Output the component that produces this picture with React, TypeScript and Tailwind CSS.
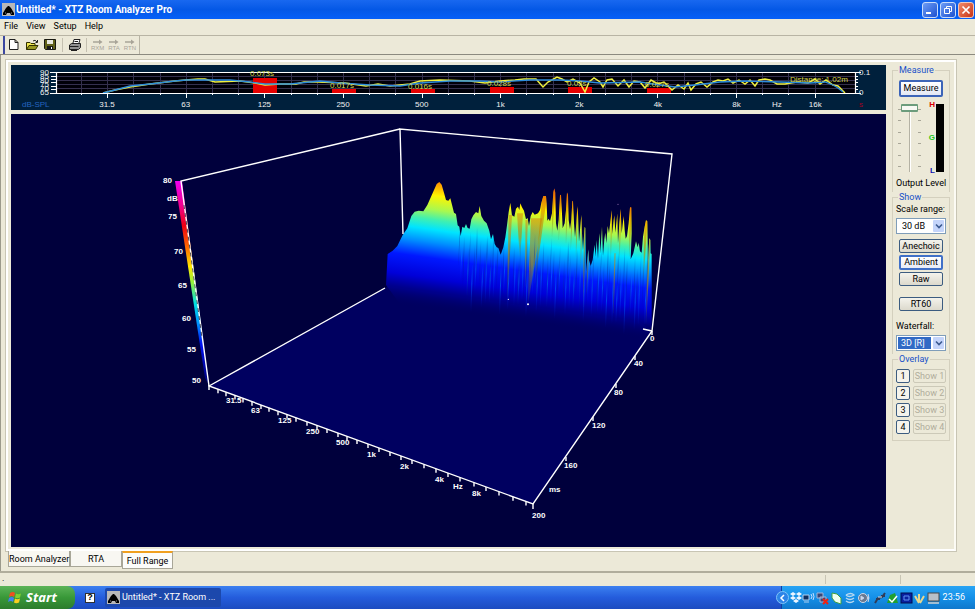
import React from "react";

const octaves = ["31.5", "63", "125", "250", "500", "1k", "2k", "4k", "8k", "16k"];

const reverb = [
  { x: 253, y: 78, label: "0.073s", lx: 250, ly: 76 },
  { x: 332, y: 89, label: "0.017s", lx: 330, ly: 88 },
  { x: 411, y: 89, label: "0.016s", lx: 408, ly: 89 },
  { x: 490, y: 87, label: "0.028s", lx: 487, ly: 86 },
  { x: 568, y: 87, label: "0.03s", lx: 567, ly: 86 },
  { x: 647, y: 88, label: "0.027s", lx: 645, ly: 87 },
];

const ambientCurve =
  "M103 93 L115 90 L130 87 L150 84 L175 81 L186 80 L198 79 L205 79 L215 82 L240 81 L255 83 L265 85 L280 84 L296 84 L304 82 L318 82 L345 83 L366 86 L378 84 L390 86 L410 84 L420 81 L440 80 L470 81 L485 83 L500 81 L515 80 L524 79 L536 79 L543 87 L548 82 L557 77 L562 79 L567 82 L573 79 L580 83 L585 92 L589 82 L594 78 L600 82 L603 87 L607 80 L612 79 L618 86 L624 80 L629 87 L634 81 L640 82 L645 88 L651 80 L658 84 L664 82 L672 90 L678 85 L684 89 L688 83 L691 90 L696 84 L701 82 L707 87 L713 82 L718 80 L723 81 L728 79 L733 83 L739 80 L745 84 L750 80 L755 86 L759 80 L765 79 L770 80 L777 84 L785 84 L797 82 L808 83 L815 79 L820 84 L826 80 L833 85 L838 86 L845 93";

const anechoicCurve =
  "M103 93 L115 90 L130 86 L150 84 L175 81 L186 80 L230 80 L250 82 L265 84 L290 84 L320 81 L340 83 L370 85 L400 86 L420 83 L450 81 L480 81 L500 82 L530 80 L560 80 L580 81 L600 83 L640 82 L660 85 L675 87 L695 85 L720 82 L745 81 L780 82 L810 83 L825 82 L833 85 L838 88 L843 92";

function LevelChart() {
  return (
    <svg viewBox="11 65 875 45" className="block w-full bg-[#00203c]" role="img" aria-label="Sound level by frequency">
      <rect x="56" y="72" width="799" height="21" fill="#000008" />
      <g stroke="#34304e" strokeWidth="1">
        {[76, 80, 84, 88].map((y) => (
          <path key={y} d={`M56 ${y + 0.5}H855`} />
        ))}
        {Array.from({ length: 29 }, (_, i) => (
          <path key={i} d={`M${Math.round(81 + i * 26.2) + 0.5} 72V93`} />
        ))}
      </g>
      {reverb.map((r) => (
        <rect key={r.x} x={r.x} y={r.y} width="24" height={93 - r.y} fill="#e60000" />
      ))}
      <path d={ambientCurve} fill="none" stroke="#f0f040" strokeWidth="1.5" />
      <path d={anechoicCurve} fill="none" stroke="#2c8cdc" strokeWidth="1.3" />
      <g stroke="#fff" fill="none">
        <path d="M50 72.5H861M50 93.5H861M56.5 72V94M855.5 72V94" strokeWidth="1.2" />
        {Array.from({ length: 29 }, (_, i) => (
          <path key={i} d={`M${Math.round(81 + i * 26.2) + 0.5} 93V${i % 3 === 1 ? 98 : 95}`} />
        ))}
        {[76, 79, 82, 86, 89].map((y) => (
          <path key={y} d={`M51 ${y + 0.5}H56M855 ${y + 0.5}H858`} />
        ))}
      </g>
      <g fill="#d4d448" className="font-['Liberation_Sans',sans-serif] text-[8px]">
        {reverb.map((r) => (
          <text key={r.lx} x={r.lx} y={r.ly}>{r.label}</text>
        ))}
        <text x="790" y="82">Distance: 1.02m</text>
      </g>
      <g fill="#f0f0f0" className="font-['Liberation_Sans',sans-serif] text-[8px]">
        {octaves.map((o, i) => (
          <text key={o} x={107 + i * 78.7} y="107" textAnchor="middle">{o}</text>
        ))}
        <text x="772" y="107">Hz</text>
        {["90", "85", "80", "75", "70", "65"].map((t, i) => (
          <text key={t} x="40" y={75 + i * 4}>{t}</text>
        ))}
        <text x="859" y="75">0.1</text>
        <text x="859" y="95">0</text>
        <text x="859" y="107" fill="#a00020">s</text>
        <text x="22" y="107" fill="#2464c0">dB-SPL</text>
      </g>
    </svg>
  );
}

const skyline =
  "M48 375 L53 282 L68 272 L82 258 L98 225 L112 205 L124 168 L134 155 L146 152 L160 154 L172 135 L184 108 L192 90 L200 72 L208 66 L215 74 L222 98 L228 120 L235 122 L241 115 L246 134 L252 158 L258 162 L263 196 L268 200 L272 228 L277 200 L283 204 L288 192 L293 204 L299 206 L304 178 L310 166 L318 156 L325 160 L329 138 L334 168 L342 182 L350 190 L358 212 L363 238 L369 222 L374 252 L380 262 L385 264 L392 284 L400 262 L406 232 L411 196 L416 156 L421 128 L426 166 L433 170 L438 146 L444 140 L448 150 L451 130 L456 142 L462 152 L468 178 L473 174 L477 198 L482 168 L488 156 L494 164 L504 160 L510 150 L514 128 L520 108 L528 108 L530 130 L532 182 L536 176 L540 184 L546 160 L550 96 L553 85 L556 98 L558 190 L562 212 L566 180 L570 106 L573 104 L575 140 L578 205 L584 190 L588 150 L591 97 L594 104 L596 180 L600 208 L604 180 L607 122 L609 124 L612 190 L615 232 L619 190 L622 138 L624 160 L627 245 L630 210 L634 164 L636 220 L639 270 L644 200 L646 204 L648 335 L655 268 L657 300 L662 318 L668 300 L674 254 L677 290 L680 240 L684 296 L687 238 L689 220 L691 280 L696 200 L699 288 L703 238 L706 218 L709 250 L713 198 L717 220 L721 186 L725 150 L727 222 L731 180 L733 166 L736 218 L740 180 L742 160 L744 250 L748 190 L752 146 L755 220 L761 168 L764 210 L767 236 L771 228 L776 190 L780 142 L784 142 L785 220 L782 298 L790 280 L794 262 L798 244 L803 262 L806 248 L810 274 L815 278 L819 230 L824 200 L828 180 L832 184 L834 300 L838 234 L841 240 L842 280 L845 282 L845 500 L820 560 L110 460 Z";

// Narrow ridges of later decay slices seen through the front of the surface.
const ridges = [
  [421, 165, 412, 410, 10], [450, 160, 450, 290, 18], [470, 180, 466, 380, 7],
  [500, 175, 474, 428, 34], [524, 108, 494, 370, 14], [552, 88, 546, 230, 6],
  [572, 108, 566, 240, 4], [592, 100, 588, 250, 5], [608, 125, 602, 270, 4],
  [622, 145, 618, 290, 4], [635, 172, 632, 330, 3], [644, 205, 640, 440, 4],
  [656, 272, 650, 400, 3], [725, 152, 722, 300, 3], [735, 280, 730, 460, 4],
  [752, 150, 748, 300, 4], [782, 144, 778, 290, 6], [828, 184, 820, 360, 8],
  [838, 240, 828, 490, 7],
];

const verticalLabels: [string, number, number][] = [
  ["80", 163, 183], ["dB", 167, 201], ["75", 168, 219], ["70", 174, 254],
  ["65", 178, 288], ["60", 182, 321], ["55", 187, 352], ["50", 192, 383],
];

const frequencyLabels: [string, number, number][] = [
  ["31.5", 226, 403], ["63", 251, 413], ["125", 278, 423], ["250", 306, 434],
  ["500", 336, 445], ["1k", 367, 457], ["2k", 400, 469], ["4k", 435, 482],
  ["Hz", 453, 489], ["8k", 472, 496],
];

const timeLabels: [string, number, number][] = [
  ["0", 650, 341], ["40", 634, 366], ["80", 614, 395], ["120", 592, 428],
  ["160", 564, 468], ["ms", 549, 492], ["200", 532, 518],
];

const axisTicks = [
  218, 226, 235, 243, 252, 261, 269, 278, 287, 296, 307, 317, 327, 338, 347, 357, 368,
  379, 390, 401, 412, 424, 436, 448, 460, 474, 486, 499, 513, 526,
];

function Waterfall() {
  return (
    <svg viewBox="11 114 875 433" className="block w-full bg-[#00003c]" role="img" aria-label="3D waterfall">
      <defs>
        <linearGradient id="level" gradientUnits="userSpaceOnUse" x1="0" y1="0" x2="0" y2="430" gradientTransform="translate(0 -7) skewY(8)">
          <stop offset="0" stopColor="#d03020" />
          <stop offset="0.09" stopColor="#ff7c00" />
          <stop offset="0.14" stopColor="#ffb400" />
          <stop offset="0.2" stopColor="#fff400" />
          <stop offset="0.3" stopColor="#a8f850" />
          <stop offset="0.37" stopColor="#40f0b0" />
          <stop offset="0.44" stopColor="#00e4ff" />
          <stop offset="0.53" stopColor="#0090ff" />
          <stop offset="0.64" stopColor="#0018ff" />
          <stop offset="0.78" stopColor="#0000d8" />
          <stop offset="0.88" stopColor="#000090" stopOpacity="0.9" />
          <stop offset="1" stopColor="#000060" stopOpacity="0" />
        </linearGradient>
        <linearGradient id="ridge" x1="0" y1="0" x2="0" y2="1">
          <stop offset="0" stopColor="#e07800" stopOpacity="0.5" />
          <stop offset="0.55" stopColor="#b09000" stopOpacity="0.65" />
          <stop offset="1" stopColor="#408060" stopOpacity="0.1" />
        </linearGradient>
        <linearGradient id="streak" x1="0" y1="0" x2="0" y2="1">
          <stop offset="0" stopColor="#0030a0" stopOpacity="0" />
          <stop offset="0.4" stopColor="#0030a0" stopOpacity="0.45" />
          <stop offset="1" stopColor="#000060" stopOpacity="0" />
        </linearGradient>
        <linearGradient id="glow" x1="0" y1="0" x2="0" y2="1">
          <stop offset="0" stopColor="#00a0ff" stopOpacity="0" />
          <stop offset="0.4" stopColor="#0080ff" stopOpacity="0.5" />
          <stop offset="1" stopColor="#0020ff" stopOpacity="0" />
        </linearGradient>
        <linearGradient id="scale" x1="0" y1="0" x2="0" y2="1">
          <stop offset="0" stopColor="#f000f0" />
          <stop offset="0.12" stopColor="#f00090" />
          <stop offset="0.22" stopColor="#f00010" />
          <stop offset="0.33" stopColor="#ff7000" />
          <stop offset="0.42" stopColor="#ffe800" />
          <stop offset="0.5" stopColor="#90f040" />
          <stop offset="0.6" stopColor="#00e0e0" />
          <stop offset="0.7" stopColor="#0090ff" />
          <stop offset="0.8" stopColor="#0010f0" />
          <stop offset="1" stopColor="#000070" />
        </linearGradient>
        <clipPath id="surface">
          <path d={skyline} />
        </clipPath>
      </defs>
      <path d="M209 386L533 504L652 331L640 322L388 286Z" fill="#000060" />
      <g transform="translate(370 160) scale(0.33333)">
        <path d={skyline} fill="url(#level)" />
        <g clipPath="url(#surface)">
          {ridges.map(([tx, ty, bx, by, w], i) => (
            <path key={i} d={`M${tx - w / 2} ${ty}H${tx + w / 2}L${bx + 1} ${by}H${bx - 1}Z`} fill="url(#ridge)" />
          ))}
          {Array.from({ length: 58 }, (_, i) => {
            const x = 270 + i * 10 + ((i * 7) % 5);
            const top = 190 + ((i * 37) % 90) + (x - 270) * 0.12;
            return (
              <path key={i} d={`M${x} ${top}h${2 + (i % 3)}l-6 ${130 + ((i * 23) % 60)}h-2Z`} fill="url(#streak)" />
            );
          })}
          {Array.from({ length: 40 }, (_, i) => {
            const x = 275 + i * 14 + ((i * 5) % 7);
            const top = 250 + ((i * 29) % 60) + (x - 270) * 0.13;
            return (
              <path key={i} d={`M${x} ${top}h3l-5 ${110 + ((i * 17) % 50)}h-3Z`} fill="url(#glow)" />
            );
          })}
        </g>
        <g fill="#fff">
          <circle cx="415" cy="418" r="2" />
          <circle cx="474" cy="433" r="3" />
          <circle cx="744" cy="133" r="2" fill="#8060a0" />
        </g>
      </g>
      <path d="M175 181H182L209 385L205 378Z" fill="url(#scale)" />
      <g stroke="#fff" strokeWidth="1.4" fill="none">
        <path d="M403 234L400 129L672 154L652 331L533 504L209 386L181 181L400 129" />
        <path d="M209 386L385 288M643 329L652 331" />
        <path d="M184 205L202 338" stroke="#202030" strokeWidth="0.8" strokeDasharray="4 4" />
        {axisTicks.map((x) => {
          const y = 386 + ((x - 209) * 118) / 324;
          return <path key={x} d={`M${x} ${y}v4`} />;
        })}
        <path d="M209 385v5M533 503v6M652 331v4M635 356v4M616 384v4M593 417v4M566 457v4" />
      </g>
      <g fill="#fff" className="font-['Liberation_Sans',sans-serif] text-[8px] font-bold">
        {[...verticalLabels, ...frequencyLabels, ...timeLabels].map(([t, x, y]) => (
          <text key={t + x} x={x} y={y}>{t}</text>
        ))}
      </g>
    </svg>
  );
}

function AppIcon() {
  return (
    <svg viewBox="0 0 13 13" className="size-[13px] shrink-0" aria-hidden="true">
      <rect width="13" height="13" fill="#b8b8b8" />
      <path d="M6 3h1l2 2 3 5v2H9l-1-2H5l-1 2H1v-2l3-5Z" fill="#000" />
      <path d="M3 10h1M9 10h1" stroke="#888" />
    </svg>
  );
}

const windowButton =
  "flex size-[16px] items-center justify-center rounded-[3px] border border-[#c8dcfa] bg-linear-to-br from-[#6e9cf5] to-[#1c4fd0]";

function TitleBar() {
  return (
    <header className="flex h-[19px] shrink-0 items-center justify-between bg-linear-to-b from-[#1868f0] via-[#0458e6] to-[#0660f8] pr-[1px] pl-[2px]">
      <h1 className="flex items-center gap-[1px] font-['Roboto','Noto_Sans',sans-serif] text-[10px] font-bold whitespace-nowrap text-white">
        <AppIcon />
        Untitled* - XTZ Room Analyzer Pro
      </h1>
      <div className="flex gap-[2px]">
        <button type="button" aria-label="Minimize" className={windowButton}>
          <svg viewBox="0 0 12 12" className="size-[12px]"><path d="M2 9h5" stroke="#fff" strokeWidth="2" /></svg>
        </button>
        <button type="button" aria-label="Restore" className={windowButton}>
          <svg viewBox="0 0 12 12" className="size-[12px]" fill="none" stroke="#fff"><path d="M4.500 4.500V2.500H9.500V7.500H7.500M2.500 4.500H7.500V9.500H2.500Z" /></svg>
        </button>
        <button type="button" aria-label="Close" className="flex size-[16px] items-center justify-center rounded-[3px] border border-[#f0c8bc] bg-linear-to-br from-[#f08868] to-[#c83010]">
          <svg viewBox="0 0 12 12" className="size-[12px]"><path d="M2.500 2.500l7 7M9.500 2.500l-7 7" stroke="#fff" strokeWidth="1.700" /></svg>
        </button>
      </div>
    </header>
  );
}

const toolButton = "flex items-center justify-center";

function Toolbar() {
  return (
    <div className="flex h-[19px] shrink-0 items-center border-b border-[#8c8a80] pl-[3px]">
      <div className="flex h-[18px] items-center gap-[4px] border-r border-l-2 border-r-[#b8b4a4] border-l-[#3c48a0] pr-[3px] pl-[2px]">
        <button type="button" aria-label="New" className={toolButton}>
          <svg viewBox="0 0 14 14" className="size-[14px]"><path d="M2.500 1.500H8L11 4.500V11.500H2.500ZM8 1.500V4.500H11" fill="#fff" stroke="#202020" /></svg>
        </button>
        <button type="button" aria-label="Open" className={toolButton}>
          <svg viewBox="0 0 14 14" className="size-[14px]"><path d="M1.500 11.500V4.500H5L6 5.500H10V7.500" fill="#f0e850" stroke="#303000" /><path d="M1.500 11.500L4 7.500H13L10.500 11.500Z" fill="#989820" stroke="#303000" /><path d="M8 3q2-2 4 1M12.500 2v2.500h-2" fill="none" stroke="#202020" /></svg>
        </button>
        <button type="button" aria-label="Save" className={toolButton}>
          <svg viewBox="0 0 14 14" className="size-[14px]"><path d="M1.500 1.500H12.500V11.500H2.500L1.500 10.500Z" fill="#606018" stroke="#181810" /><path d="M4 2h6v4H4z" fill="#e8e8e0" /><path d="M4 8h6v4H4z" fill="#181818" /><path d="M8 9h1v2H8z" fill="#fff" /></svg>
        </button>
        <span className="mx-px h-[14px] w-px bg-[#c4c0b0]" />
        <button type="button" aria-label="Print" className={toolButton}>
          <svg viewBox="0 0 14 14" className="size-[14px]" stroke="#202020"><path d="M4.500 6.500L6 1.500H12L10.500 6.500" fill="#fff" /><path d="M1.500 7L3.500 5.500H12.500V9.500L10.500 11.500H1.500Z" fill="#909090" /><path d="M1.500 8.500H10.500M3 12.500H9M6.500 3.500H10" fill="none" /></svg>
        </button>
        <span className="h-[14px] w-px bg-[#c4c0b0]" />
        {["RXM", "RTA", "RTN"].map((t) => (
          <button key={t} type="button" disabled className="flex flex-col items-center font-['Liberation_Sans',sans-serif] text-[6px] leading-[6px] text-[#a8a498]">
            <svg viewBox="0 0 10 6" className="h-[6px] w-[10px]"><path d="M0 3H7" stroke="#a8a498" strokeWidth="1.500" /><path d="M6 0.500L9.500 3L6 5.500Z" fill="#a8a498" /></svg>
            {t}
          </button>
        ))}
      </div>
    </div>
  );
}

const groupBox = "min-w-0 border border-b-0 border-[#d4d0be] px-[3px]";
const groupLegend = "ml-[2px] px-[1px] leading-[10px] text-[#1850c8]";
const pushButton =
  "mx-[3px] block h-[14px] rounded-[2px] border border-[#3c5c80] bg-linear-to-b from-[#f4f3ec] to-[#dcd9cc] text-center leading-[12px]";

function ComboArrow() {
  return (
    <span className="pointer-events-none flex w-[11px] items-center justify-center rounded-[1px] bg-[#c4d4fa]">
      <svg viewBox="0 0 8 6" className="h-[6px] w-[8px]"><path d="M1 1.500L4 4.500L7 1.500" fill="none" stroke="#3c5a90" strokeWidth="1.600" /></svg>
    </span>
  );
}

function TickColumn() {
  return (
    <span className="flex h-[58px] w-[3px] flex-col justify-between" aria-hidden="true">
      {[0, 1, 2, 3, 4, 5].map((i) => (
        <span key={i} className="h-px bg-[#a8a698]" />
      ))}
    </span>
  );
}

function SidePanel() {
  return (
    <aside className="w-[58px] shrink-0">
      <fieldset className={groupBox}>
        <legend className={groupLegend}>Measure</legend>
        <button type="button" className="mx-[3px] mt-[5px] block h-[17px] w-[44px] rounded-[2px] border-2 border-[#3c64b8] bg-linear-to-b from-white to-[#e4e8f4] text-center leading-[13px]">
          Measure
        </button>
        <div className="mt-[4px] flex h-[74px] justify-between px-[2px]">
          <div className="flex items-center">
            <TickColumn />
            <input
              id="output-level"
              type="range"
              min={0}
              max={100}
              defaultValue={100}
              className="h-[68px] w-[17px] appearance-none bg-transparent [direction:rtl] [writing-mode:vertical-lr] [&::-webkit-slider-runnable-track]:h-full [&::-webkit-slider-runnable-track]:w-full [&::-webkit-slider-runnable-track]:bg-[linear-gradient(90deg,transparent_8px,#b4b2a4_8px,#b4b2a4_9px,#fff_9px,#fff_10px,transparent_10px)] [&::-webkit-slider-thumb]:h-[8px] [&::-webkit-slider-thumb]:w-[17px] [&::-webkit-slider-thumb]:appearance-none [&::-webkit-slider-thumb]:rounded-[1px] [&::-webkit-slider-thumb]:border [&::-webkit-slider-thumb]:border-x-2 [&::-webkit-slider-thumb]:border-[#6c9c7c] [&::-webkit-slider-thumb]:bg-[#f8f8f4]"
            />
            <TickColumn />
          </div>
          <div className="flex">
            <span className="flex flex-col justify-between pr-[1px] text-right font-['Liberation_Sans',sans-serif] text-[8px] leading-[8px] font-bold">
              <span className="text-[#d80000]">H</span>
              <span className="text-[#20c820]">G</span>
              <span className="text-[#1010b0]">L</span>
            </span>
            <span className="my-[3px] w-[8px] bg-black" />
          </div>
        </div>
        <label htmlFor="output-level" className="flex h-[17px] items-center whitespace-nowrap">Output Level</label>
      </fieldset>

      <fieldset className={groupBox}>
        <legend className={groupLegend}>Show</legend>
        <label htmlFor="scale-range" className="block leading-[14px] whitespace-nowrap">Scale range:</label>
        <div className="mt-[2px] flex h-[16px] border border-[#7f9db9] bg-white p-px">
          <select id="scale-range" defaultValue="30 dB" className="min-w-0 flex-1 appearance-none bg-white pl-[4px] leading-[12px] outline-none">
            <option>30 dB</option>
            <option>60 dB</option>
          </select>
          <ComboArrow />
        </div>
        <div className="mt-[5px] flex flex-col gap-[2px]">
          <button type="button" className={pushButton}>Anechoic</button>
          <button type="button" className="mx-[3px] block h-[15px] rounded-[2px] border-2 border-[#4070c8] bg-linear-to-b from-white to-[#e8ecf6] text-center leading-[11px]">
            Ambient
          </button>
          <button type="button" className={pushButton}>Raw</button>
        </div>
        <div className="mt-[11px] flex flex-col">
          <button type="button" className={pushButton}>RT60</button>
        </div>
        <label htmlFor="waterfall" className="mt-[8px] block leading-[14px]">Waterfall:</label>
        <div className="mt-[2px] mb-[3px] flex h-[16px] border border-[#7f9db9] bg-white p-px">
          <select id="waterfall" defaultValue="3D [R]" className="mr-[2px] min-w-0 flex-1 appearance-none bg-[#316ac5] pl-[3px] leading-[12px] text-white outline-none">
            <option>3D [R]</option>
            <option>2D</option>
          </select>
          <ComboArrow />
        </div>
      </fieldset>

      <fieldset className="min-w-0 border border-[#d4d0be] px-[3px] pb-[6px]">
        <legend className={groupLegend}>Overlay</legend>
        <div className="mt-[5px] flex flex-col gap-[3px]">
          {[1, 2, 3, 4].map((n) => (
            <div key={n} className="flex gap-[3px]">
              <button type="button" aria-label={`Store overlay ${n}`} className="h-[14px] w-[14px] shrink-0 rounded-[2px] border border-[#3c5c80] bg-[#f4f3ec] text-center leading-[12px]">{n}</button>
              <button type="button" disabled className="h-[14px] flex-1 rounded-[2px] border border-[#ccc9b8] text-center leading-[12px] whitespace-nowrap text-[#b0ad9c]">Show {n}</button>
            </div>
          ))}
        </div>
      </fieldset>
    </aside>
  );
}

function TrayIcons() {
  return (
    <svg viewBox="0 0 152 14" className="h-[14px] w-[152px]" aria-hidden="true">
      <path d="M4 1L7 3L4 5L1 3ZM10 1L13 3L10 5L7 3ZM4 5L7 7L4 9L1 7ZM10 5L13 7L10 9L7 7ZM7 8L10 10L7 12L4 10Z" fill="#eef6ff" />
      <path d="M14 4h6v5h-6zM15 11h5" fill="#103060" stroke="#b0d0f0" />
      <path d="M22 3q2 3 0 5M24 2q2 4 0 7" fill="none" stroke="#c8e0ff" />
      <path d="M28 2h6v5h-6zM31 6h6v5h-6z" fill="#384878" stroke="#a0b4d8" />
      <path d="M34 8l5 5M39 8l-5 5" stroke="#f02010" strokeWidth="2" />
      <path d="M43 2l5 1 4 4 0 6-6-2-3-4Z" fill="#f0fff0" stroke="#40a040" />
      <path d="M57 4q5-3 8 0q-5 3-8 0M57 7q4 3 8 0M57 10q4 3 8 0" fill="none" stroke="#b8d8f0" strokeWidth="1.400" />
      <circle cx="74" cy="7" r="4.500" fill="#687890" stroke="#d0d8e8" />
      <path d="M72 5l3 2-3 2zM79 3q2 4 0 8" fill="#d8e0f0" stroke="#c0d0e8" />
      <path d="M86 12l3-5 4-1 3-4M87 8h4M92 5h4" fill="none" stroke="#303c58" strokeWidth="2" />
      <path d="M89 6l4 0" stroke="#d0e0f0" />
      <path d="M98 12l3-8 5-2 3 10Z" fill="#20a030" />
      <path d="M100 8l3 3 5-6" fill="none" stroke="#fff" strokeWidth="1.500" />
      <rect x="112" y="2" width="11" height="10" fill="#0820a0" stroke="#000c50" />
      <path d="M115 5h5v4h-5z" fill="none" stroke="#6090f0" />
      <path d="M126 5l4 7M130 3v8M135 5l-4 7" fill="none" stroke="#e8d890" strokeWidth="2" />
      <rect x="139" y="2" width="11" height="8" fill="#b8c0c8" stroke="#484848" />
      <path d="M139 12h11" stroke="#d0d0d0" strokeWidth="1.500" />
    </svg>
  );
}

function Taskbar() {
  return (
    <footer className="flex h-[23px] shrink-0 bg-linear-to-b from-[#3c80f0] via-[#245cdc] to-[#1c4cc0] text-white">
      <button type="button" className="flex w-[75px] items-center gap-[4px] rounded-r-[8px] bg-linear-to-b from-[#5cb458] via-[#389838] to-[#2c7c2c] pl-[8px] font-['Open_Sans',sans-serif] text-[13px] font-bold italic">
        <svg viewBox="0 0 14 14" className="size-[14px]" aria-hidden="true">
          <path d="M2 2q3-2 5 0l-1 4q-2-2-5 0Z" fill="#f05020" />
          <path d="M8 2.500q2 1.500 5 0l-1 4q-3 1.500-5 0Z" fill="#80d030" />
          <path d="M1 7q3-2 5 0l-1 4q-2-2-5 0Z" fill="#4080f0" />
          <path d="M7 7.500q2 1.500 5 0l-1 4q-3 1.500-5 0Z" fill="#f8d020" />
        </svg>
        Start
      </button>
      <button type="button" aria-label="Help" className="mx-[10px] my-auto flex size-[10px] items-center justify-center border border-[#303030] bg-white font-['Liberation_Sans',sans-serif] text-[9px] leading-[9px] font-bold text-black">
        ?
      </button>
      <button type="button" className="my-[2px] flex w-[116px] items-center gap-[2px] rounded-[2px] bg-[#1c48ac] pl-[2px] whitespace-nowrap">
        <AppIcon />
        Untitled* - XTZ Room ...
      </button>
      <div className="ml-auto flex w-[194px] items-center border-l border-[#1040a0] bg-linear-to-b from-[#28a4f4] via-[#1490e8] to-[#1078cc]">
        <button type="button" aria-label="Show hidden icons" className="-ml-[6px] flex size-[13px] items-center justify-center rounded-full border border-[#80c4f8] bg-[#2c84e8]">
          <svg viewBox="0 0 8 8" className="size-[8px]"><path d="M5 1L2 4l3 3" fill="none" stroke="#fff" strokeWidth="1.500" /></svg>
        </button>
        <TrayIcons />
        <time className="ml-auto pr-[10px]">23:56</time>
      </div>
    </footer>
  );
}

export default function App() {
  return (
    <div className="flex min-h-screen flex-col bg-[#ece9d8] font-['Roboto','Liberation_Sans',sans-serif] text-[9px] text-black">
      <TitleBar />
      <nav className="flex h-[17px] shrink-0 items-center gap-[8px] border-b border-[#b8b4a4] pl-[4px]">
        {["File", "View", "Setup", "Help"].map((m) => (
          <button key={m} type="button">{m}</button>
        ))}
      </nav>
      <Toolbar />
      <main className="flex-1 border-l border-[#9c9a8c] pt-[5px] pr-[19px] pl-[5px]">
        <div className="flex gap-[6px] border-2 border-white border-r-[#fcfbf4] bg-[#ece9d8] pt-[3px] pr-[4px] pb-[2px] pl-[3px] shadow-[0_0_0_1px_#c8c5b4]">
          <div className="flex min-w-0 flex-1 flex-col gap-[4px]">
            <LevelChart />
            <Waterfall />
          </div>
          <SidePanel />
        </div>
        <div role="tablist" className="flex items-start pl-[2px]">
          <button type="button" role="tab" aria-selected="false" className="h-[16px] w-[62px] border border-t-0 border-[#a8a698] bg-[#f8f7f2] leading-[16px] whitespace-nowrap">Room Analyzer</button>
          <button type="button" role="tab" aria-selected="false" className="h-[16px] w-[52px] border border-t-0 border-[#a8a698] bg-[#f8f7f2] leading-[16px]">RTA</button>
          <button type="button" role="tab" aria-selected="true" className="h-[18px] w-[51px] border border-t-2 border-[#a8a698] border-t-[#f0a020] bg-[#fcfcfa] leading-[16px] whitespace-nowrap">Full Range</button>
        </div>
      </main>
      <div role="status" className="flex h-[15px] shrink-0 border-t-2 border-[#b0ad9c] pl-[2px] leading-[10px]">
        <span className="flex-1">.</span>
        <span className="my-[2px] w-[75px] border-l border-[#c8c5b4]" />
        <span className="my-[2px] w-[75px] border-l border-[#c8c5b4]" />
      </div>
      <Taskbar />
    </div>
  );
}
